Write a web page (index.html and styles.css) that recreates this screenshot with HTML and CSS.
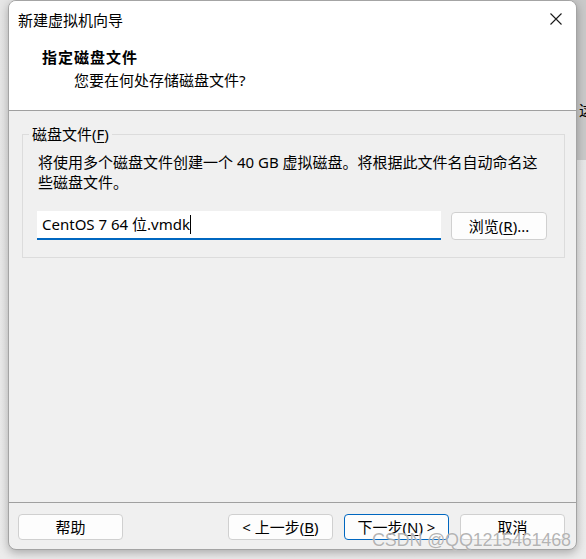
FILE: index.html
```html
<!DOCTYPE html>
<html lang="zh-CN">
<head>
<meta charset="utf-8">
<title>新建虚拟机向导</title>
<link rel="stylesheet" href="styles.css">
</head>
<body>
<div class="desktop">
  <div class="bgwin"><span class="bgwin-text">这</span></div>
  <div class="dialog">
    <div class="titlebar">
      <span class="title">新建虚拟机向导</span>
      <span class="close" aria-label="关闭">
        <svg width="12" height="12" viewBox="0 0 12 12"><path d="M0.5 0.5 L11.5 11.5 M11.5 0.5 L0.5 11.5" stroke="#1a1a1a" stroke-width="1.1" fill="none"/></svg>
      </span>
    </div>
    <div class="header">
      <div class="heading">指定磁盘文件</div>
      <div class="subheading">您要在何处存储磁盘文件?</div>
    </div>
    <div class="content">
      <fieldset class="group">
        <legend class="group-label">磁盘文件(<u>F</u>)</legend>
        <p class="desc">将使用多个磁盘文件创建一个 40 GB 虚拟磁盘。将根据此文件名自动命名这<br>些磁盘文件。</p>
        <div class="file-row">
          <div class="textbox"><span class="value">CentOS 7 64 位.vmdk</span><span class="caret"></span></div>
          <button class="btn browse">浏览(<u>R</u>)...</button>
        </div>
      </fieldset>
    </div>
    <div class="footer">
      <button class="btn">帮助</button>
      <button class="btn prev">&lt; 上一步(<u>B</u>)</button>
      <button class="btn next">下一步(<u>N</u>) &gt;</button>
      <button class="btn">取消</button>
    </div>
  </div>
  <div class="watermark">CSDN @QQ1215461468</div>
</div>
</body>
</html>
```

FILE: styles.css
```css
* { box-sizing: border-box; }

html, body {
  margin: 0;
  padding: 0;
}

body {
  background: #e9e9e9;
  font-family: "Noto Sans", "Noto Sans CJK SC", sans-serif;
  font-size: 15px;
  color: #000;
  overflow: hidden;
}

.desktop {
  position: relative;
  width: 586px;
  height: 559px;
  background: linear-gradient(to bottom, #e6e6e6 0, #ececec 100%);
}

.bgwin {
  position: absolute;
  left: 570px;
  top: 0;
  width: 30px;
  height: 160px;
  background: #c9c9c9;
  overflow: hidden;
}

.bgwin-text {
  position: absolute;
  left: 9px;
  top: 100px;
  line-height: 20px;
  font-family: "Noto Sans CJK SC", sans-serif;
  font-size: 15px;
}

.dialog {
  position: absolute;
  left: 8px;
  top: 0;
  width: 569px;
  height: 550px;
  border: 1px solid #a4a4a4;
  border-radius: 8px;
  overflow: hidden;
  display: flex;
  flex-direction: column;
  background: #f0f0f0;
  box-shadow: 0 3px 10px rgba(0, 0, 0, 0.28);
}

.titlebar {
  height: 38px;
  flex: none;
  display: flex;
  align-items: center;
  justify-content: space-between;
  padding: 0 14px 0 9px;
  background: #fff;
}

.title {
  line-height: 20px;
}

.close {
  display: flex;
  width: 12px;
  height: 12px;
  margin-top: -2px;
}

.header {
  flex: none;
  background: #fff;
  padding: 8px 0 20px 33px;
  border-bottom: 1px solid #a0a0a0;
}

.heading {
  font-weight: 700;
  line-height: 20px;
  letter-spacing: 1px;
  font-family: "Noto Sans CJK SC", sans-serif;
}

.subheading {
  margin-top: 3px;
  padding-left: 32px;
  line-height: 20px;
}

.content {
  flex: 1;
  padding: 13px 11px 0 13px;
}

.group {
  margin: 0;
  border: 1px solid #dcdcdc;
  padding: 8px 16px 17px 14px;
  min-width: 0;
}

.group-label {
  margin-left: -8px;
  padding: 0 3px;
  line-height: 20px;
}

.group-label u,
.btn u {
  text-decoration-thickness: 1px;
  text-underline-offset: 2px;
}

.desc {
  margin: 0;
  padding-left: 1px;
  line-height: 20px;
}

.file-row {
  display: flex;
  align-items: flex-start;
  gap: 10px;
  margin-top: 19px;
}

.textbox {
  width: 404px;
  height: 29px;
  flex: none;
  background: #fff;
  border-bottom: 2px solid #0067c0;
  display: flex;
  align-items: center;
  padding: 0 0 1px 5px;
}

.value {
  line-height: 20px;
}

.caret {
  width: 1px;
  height: 19px;
  background: #000;
  margin-left: 0;
}

.btn {
  font: inherit;
  color: #000;
  height: 26px;
  width: 105px;
  padding: 0;
  line-height: 20px;
  background: #fdfdfd;
  border: 1px solid #d0d0d0;
  border-radius: 4px;
}

.browse {
  width: 96px;
  height: 28px;
  margin-top: 1px;
}

.footer {
  flex: none;
  border-top: 1px solid #a0a0a0;
  display: flex;
  gap: 11px;
  padding: 11px 11px 9px 9px;
}

.prev {
  margin-left: auto;
}

.next {
  border-color: #0067c0;
}

.watermark {
  position: absolute;
  left: 372px;
  top: 529px;
  font-family: "Liberation Sans", Arial, sans-serif;
  font-size: 18px;
  letter-spacing: -0.2px;
  line-height: 22px;
  color: rgba(130, 130, 130, 0.6);
  text-shadow: 0 0 1px #fff;
  white-space: nowrap;
}
```
